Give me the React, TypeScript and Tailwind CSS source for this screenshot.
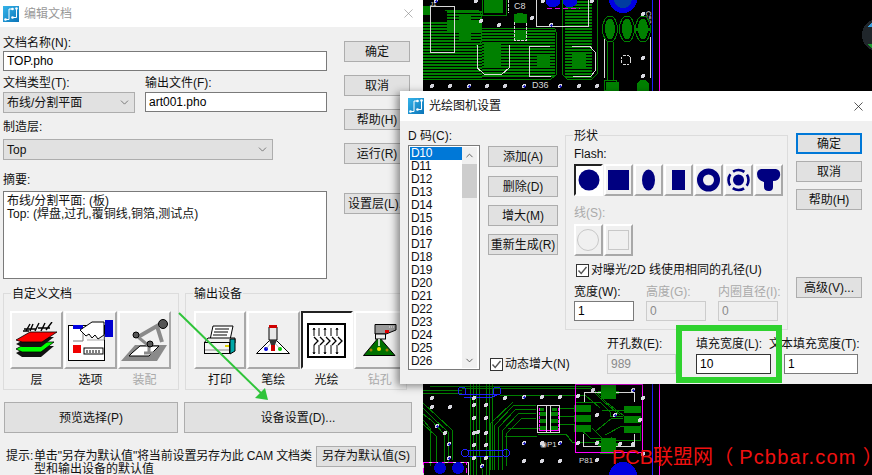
import { ChevronDown, ChevronUp, X } from "lucide-react";
import type { ReactNode } from "react";

const GREEN = "#008000";

const AppIcon = () => (
  <svg width="16" height="16" viewBox="0 0 16 16" className="shrink-0">
    <defs>
      <linearGradient id="appbg" x1="0" y1="0" x2="1" y2="1">
        <stop offset="0" stopColor="#35b4ea" />
        <stop offset="1" stopColor="#0b74b8" />
      </linearGradient>
    </defs>
    <rect width="16" height="16" fill="url(#appbg)" />
    <path d="M2.5 13.5H6V3H9.5M13.5 2.5V11.5H9.5" fill="none" stroke="#fff" strokeWidth="1" />
    <circle cx="2.5" cy="13.5" r="1.3" fill="#fff" />
    <circle cx="9.5" cy="3" r="1.3" fill="#fff" />
    <circle cx="13.5" cy="2.5" r="1.3" fill="#fff" />
    <circle cx="9.5" cy="11.5" r="1.3" fill="#fff" />
  </svg>
);

const Btn = ({ children, className = "" }: { children: ReactNode; className?: string }) => (
  <div className={`flex h-[21px] items-center justify-center whitespace-nowrap border border-[#adadad] bg-[#e1e1e1] text-[12px] text-[#111] ${className}`}>
    {children}
  </div>
);

const Field = ({ value, className = "", disabled = false }: { value: string; className?: string; disabled?: boolean }) => (
  <input
    readOnly
    value={value}
    className={`block h-[20px] border px-[3px] text-[12px] outline-none ${
      disabled ? "border-[#cccccc] bg-[#efefef] text-[#8a8a8a]" : "border-[#7a7a7a] bg-white text-black"
    } ${className}`}
  />
);

const Select = ({ value, className = "" }: { value: string; className?: string }) => (
  <div className={`flex h-[21px] items-center justify-between border border-[#adadad] bg-[#e1e1e1] pl-[3px] pr-[3px] text-[12px] text-[#111] ${className}`}>
    <span>{value}</span>
    <ChevronDown size={13} strokeWidth={1.2} className="text-[#444]" />
  </div>
);

const Check = ({ label }: { label: string }) => (
  <div className="flex h-[16px] items-center gap-[2px] whitespace-nowrap text-[12px] text-[#111]">
    <span className="flex h-[13px] w-[13px] items-center justify-center border border-[#333] bg-white">
      <svg width="11" height="11" viewBox="0 0 11 11">
        <path d="M1.5 5.5L4.2 8.5L9.5 2" fill="none" stroke="#555" strokeWidth="1.4" />
      </svg>
    </span>
    {label}
  </div>
);

const Group = ({ title, className = "", children }: { title: string; className?: string; children: ReactNode }) => (
  <div className={`relative border border-[#dcdcdc] ${className}`}>
    <span className="absolute -top-[7px] left-[7px] bg-[#f0f0f0] px-[1px] text-[12px] leading-[14px] text-[#111]">{title}</span>
    {children}
  </div>
);

const IconButton = ({ pressed = false, children }: { pressed?: boolean; children: ReactNode }) => (
  <div
    className={`flex h-[58px] w-[53px] items-center justify-center border-2 ${
      pressed
        ? "border-t-[#222] border-l-[#222] border-r-white border-b-white bg-white"
        : "border-t-white border-l-white border-r-[#a8a8a8] border-b-[#a8a8a8] bg-[#f0f0f0]"
    }`}
  >
    {children}
  </div>
);

const LayerIcon = () => (
  <svg width="42" height="36" viewBox="0 0 42 36">
    <path d="M0 31L13 24H38L25 35H6Z" fill="#111" />
    <path d="M0 27L13 20H38L25 30H6Z" fill="#00ff00" stroke="#000" strokeWidth="0.8" />
    <path d="M0 22L13 15H38L25 25H6Z" fill="#111" />
    <path d="M0 18L14 10H41L26 20H6Z" fill="#ff0000" stroke="#000" strokeWidth="0.8" />
    <path d="M10 9L14 2M14 9L17 2M19 9L23 1M25 9L29 1M30 8L36 0M8 7H20M22 6H34M7 9H13" stroke="#000" strokeWidth="1.4" fill="none" />
  </svg>
);

const OptionIcon = () => (
  <svg width="45" height="41" viewBox="0 0 45 41">
    <rect x="0.5" y="5.5" width="36" height="35" fill="#fff" stroke="#000" />
    <rect x="5" y="5" width="10" height="4" fill="#0000e0" />
    <path d="M5 21H15M15 13V21" stroke="#777" fill="none" />
    <path d="M15 14H36V20H19" fill="#f4f4f4" stroke="#aaa" />
    <rect x="5" y="25" width="8" height="8" fill="#f00000" />
    <rect x="16" y="28" width="19" height="6" fill="#fff" stroke="#000" />
    <path d="M19 30v3M22 30v3M25 30v3M28 30v3M31 30v3" stroke="#000" />
    <path d="M12 10L24 2H36V15L30 19L27 15L24 18L21 14L18 16Z" fill="#fff" stroke="#000" />
    <rect x="37" y="0" width="8" height="17" fill="#0000d0" />
  </svg>
);

const RobotIcon = () => (
  <svg width="47" height="44" viewBox="0 0 47 44">
    <path d="M0 43L14 27H46L36 43Z" fill="#8a8a8a" />
    <path d="M11 35L19 28H38L28 38H8Z" fill="#fff" stroke="#000" />
    <path d="M17 19L36 8L41 24" fill="none" stroke="#8a8a8a" strokeWidth="4" />
    <path d="M17 19L28 28V34" fill="none" stroke="#8a8a8a" strokeWidth="3" />
    <path d="M23 35H33" stroke="#8a8a8a" strokeWidth="3" />
    <circle cx="15" cy="17" r="3" fill="#555" stroke="#000" />
    <circle cx="42" cy="6" r="4.5" fill="#555" stroke="#000" />
    <circle cx="29" cy="26" r="3" fill="#555" stroke="#000" />
  </svg>
);

const PrinterIcon = () => (
  <svg width="32" height="30" viewBox="0 0 32 30">
    <path d="M9 1H29L26 15H6Z" fill="#fff" stroke="#000" />
    <path d="M11 4H25M10 7H24M9 10H23" stroke="#000" />
    <path d="M4 13H31V18H0Z" fill="#f0f0f0" stroke="#000" />
    <path d="M26 14H31V26L26 29Z" fill="#00a8a8" stroke="#000" />
    <rect x="0.5" y="17.5" width="25" height="11" fill="#f4f4f4" stroke="#000" />
    <rect x="21" y="20" width="4" height="2" fill="#e0d000" />
    <path d="M1 25H25" stroke="#888" />
  </svg>
);

const PenIcon = () => (
  <svg width="34" height="30" viewBox="0 0 34 30">
    <path d="M0.5 28.5L17 12L33.5 28.5Z" fill="#fff" stroke="#000" />
    <path d="M13 2H21V15H13Z" fill="#e8e8e8" stroke="#000" />
    <rect x="13" y="0" width="8" height="3" fill="#d00000" />
    <path d="M13 15H21L19 20H15Z" fill="#333" />
    <rect x="15" y="20" width="4" height="6" fill="#d00000" />
    <circle cx="10" cy="24" r="2" fill="#0000e0" />
    <circle cx="24" cy="24" r="2" fill="#00d000" />
    <path d="M10 24L15 18M24 24L19 18" stroke="#888" strokeWidth="0.6" />
  </svg>
);

const PhotoIcon = () => (
  <svg width="39" height="35" viewBox="0 0 39 35">
    <rect x="1" y="1" width="37" height="33" fill="#fff" stroke="#000" strokeWidth="2" />
    <path d="M7 5V13M12 5V13M18 5V13M24 5V13M30 5V13M7 22V31M12 22V31M18 22V31M24 22V31M30 22V31" stroke="#000" />
    <path d="M6 7L7 5L8 7M17 7L18 5L19 7M29 7L30 5L31 7M6 29L7 31L8 29M17 29L18 31L19 29M29 29L30 31L31 29" fill="none" stroke="#000" />
    <path d="M7 14L11 18L7 22M13 14L17 18L13 22M19 14L23 18L19 22M25 14L29 18L25 22M31 14L35 18L31 22" fill="none" stroke="#000" strokeWidth="1.3" />
  </svg>
);

const DrillIcon = () => (
  <svg width="34" height="33" viewBox="0 0 34 33">
    <path d="M0.5 31.5L16 13L32 31.5Z" fill="#007000" stroke="#000" />
    <path d="M12 0.5H33V6L23 10H12Z" fill="#9a9a9a" stroke="#000" />
    <path d="M26 3h1M28 3h1M30 3h1" stroke="#eee" />
    <rect x="12.5" y="10" width="10" height="5" fill="#eee" stroke="#000" />
    <rect x="22" y="6" width="4" height="3" fill="#e00000" />
    <path d="M16 15V22" stroke="#fff" strokeWidth="1.5" />
    <circle cx="16" cy="25" r="2" fill="#e8e800" />
    <circle cx="8" cy="26" r="1.5" fill="#a08000" />
    <circle cx="24" cy="26" r="1.5" fill="#a08000" />
  </svg>
);

const ShapeButton = ({ pressed = false, children }: { pressed?: boolean; children: ReactNode }) => (
  <div
    className={`flex h-[32px] w-[29px] items-center justify-center border-2 ${
      pressed
        ? "border-t-[#222] border-l-[#222] border-r-white border-b-white bg-white"
        : "border-t-white border-l-white border-r-[#a8a8a8] border-b-[#a8a8a8] bg-[#f0f0f0]"
    }`}
  >
    <svg width="25" height="28" viewBox="0 0 25 28">
      {children}
    </svg>
  </div>
);

const NAVY = "#000080";

const Shapes = () => (
  <div className="mt-[2px] flex gap-[1px]">
    <ShapeButton pressed>
      <circle cx="13" cy="14" r="10.5" fill={NAVY} />
    </ShapeButton>
    <ShapeButton>
      <rect x="2" y="4" width="21" height="20" fill={NAVY} />
    </ShapeButton>
    <ShapeButton>
      <ellipse cx="12.5" cy="14" rx="6.5" ry="10.5" fill={NAVY} />
    </ShapeButton>
    <ShapeButton>
      <rect x="6" y="4" width="13" height="20" fill={NAVY} />
    </ShapeButton>
    <ShapeButton>
      <circle cx="12.5" cy="14" r="8.5" fill="none" stroke={NAVY} strokeWidth="6" />
    </ShapeButton>
    <ShapeButton>
      <circle cx="12.5" cy="14" r="5.5" fill={NAVY} />
      <circle cx="12.5" cy="14" r="10" fill="none" stroke={NAVY} strokeWidth="2.6" strokeDasharray="12 3.7" strokeDashoffset="6" />
    </ShapeButton>
    <ShapeButton>
      <path d="M5 3H20Q25 4 24 10Q23 15 17 15V21Q17 25 13 25Q8 25 8 21V16Q1 14 1 8Q1 4 5 3Z" fill={NAVY} />
    </ShapeButton>
  </div>
);

const LineShapes = () => (
  <div className="mt-[3px] flex gap-[1px]">
    <ShapeButton>
      <circle cx="12" cy="14" r="10.5" fill="none" stroke="#c8c8c8" />
    </ShapeButton>
    <ShapeButton>
      <rect x="2.5" y="4.5" width="20" height="19" fill="none" stroke="#c8c8c8" />
    </ShapeButton>
  </div>
);

const Stripes = ({ x1, x2, y1, y2 }: { x1: number; x2: number; y1: number; y2: number }) => {
  const ys: number[] = [];
  for (let y = y1; y <= y2; y += 3) ys.push(y);
  return (
    <>
      {ys.map((y) => (
        <line key={y} x1={x1} x2={x2} y1={y + 1} y2={y + 1} stroke={GREEN} strokeWidth="2" />
      ))}
    </>
  );
};

const Via = ({ x, y, blue = false }: { x: number; y: number; blue?: boolean }) => (
  <>
    <circle cx={x} cy={y} r="2" fill="#d8d8e0" />
    {blue && <circle cx={x + 0.5} cy={y + 0.5} r="1.1" fill="#2020c0" />}
  </>
);

const topVias: [number, number, boolean?][] = [
  [432, 86], [450, 86], [469, 86, true], [487, 86], [505, 86], [524, 86, true], [560, 86, true], [579, 86], [597, 86],
  [481, 21], [499, 25], [551, 25, true], [532, 18], [592, 1], [543, 1], [476, 1], [436, 1, true], [643, 14], [643, 58], [643, 76],
];

const bottomVias: [number, number, boolean?][] = [
  [432, 398], [474, 398], [505, 398], [524, 397, true], [542, 397], [560, 397],
  [432, 407], [450, 407], [474, 405], [486, 405], [478, 432], [474, 418], [486, 418], [474, 433], [486, 433],
  [437, 426, true], [445, 433], [449, 444, true], [474, 445], [486, 445], [449, 458, true], [474, 458], [486, 458],
  [524, 443, true], [542, 443], [560, 443, true], [524, 461], [542, 461], [560, 461], [482, 466, true],
  [578, 396], [593, 390], [633, 390, true], [643, 398], [597, 415], [615, 415, true], [640, 420],
  [578, 443], [597, 443], [620, 444], [633, 444], [643, 454], [597, 460],
];

const PcbBackground = () => (
  <svg className="absolute inset-0" width="872" height="475" viewBox="0 0 872 475" shapeRendering="crispEdges">
    <rect width="872" height="475" fill="#000" />

    {/* top: copper pours */}
    <Stripes x1={423} x2={482} y1={22} y2={76} />
    <Stripes x1={447} x2={482} y1={11} y2={30} />
    <Stripes x1={482} x2={555} y1={30} y2={76} />
    <Stripes x1={565} x2={592} y1={1} y2={76} />
    <path d="M482 28H553Q556 28 556 32V75L551 79H482M420 79H482" fill="none" stroke={GREEN} />
    <path d="M562 0V74L567 79H592L597 74V0" fill="none" stroke={GREEN} />
    <path d="M445 10H478L481 14V42L476 46H423" fill="none" stroke={GREEN} />
    <rect x="423" y="6" width="7" height="9" fill={GREEN} />
    <rect x="459" y="16" width="12" height="24" fill={GREEN} />
    <rect x="484" y="43" width="17" height="25" fill={GREEN} />
    <rect x="537" y="54" width="13" height="13" fill={GREEN} />
    <rect x="572" y="54" width="14" height="13" fill={GREEN} />
    <rect x="484" y="0" width="19" height="13" fill={GREEN} />
    <path d="M482 0V15H506V0" fill="none" stroke={GREEN} />
    <rect x="515" y="30" width="11" height="10" fill={GREEN} />
    <rect x="514" y="14" width="13" height="9" fill={GREEN} />
    <circle cx="520" cy="18" r="5.5" fill={GREEN} />

    {/* top: silk outlines */}
    <g fill="none" stroke="#d8d8d8">
      <rect x="430.5" y="6.5" width="24" height="46" />
      <path d="M477.5 45V68L484 74H502L509 68V45" />
      <path d="M550 46.5H529.5V76.5H551" />
      <path d="M572 46.5H590L595 52V71L591 76H573" />
      <path d="M536.5 0V26.5H588V0" />
      <path d="M514.5 22V40H526.5V22M508 0V13" strokeDasharray="3 1" />
      <circle cx="626" cy="60" r="5" strokeDasharray="3 1" />
      <path d="M604 37V78M650 37V78" />
    </g>
    <text x="430" y="6" fontSize="6" fill="#ddd" fontFamily="Liberation Sans">J1</text>
    <text x="514" y="9" fontSize="9" fill="#ddd" fontFamily="Liberation Sans">C8</text>
    <text x="532" y="88" fontSize="9" fill="#ddd" fontFamily="Liberation Sans">D36</text>
    <text x="0" y="0" transform="translate(646 11) rotate(90)" fontSize="7" fill="#ddd" fontFamily="Liberation Sans">C53</text>

    {/* top: oval pads */}
    {[610, 627, 643].map((x) => (
      <g key={x}>
        <ellipse cx={x} cy="29" rx="7.5" ry="13" fill="#000" stroke={GREEN} />
        <ellipse cx={x} cy="29" rx="5" ry="10.5" fill={GREEN} />
      </g>
    ))}
    <path d="M607 42V80M613 42V80M604 80H616V90H604Z" fill="none" stroke={GREEN} />
    <rect x="606" y="82" width="13" height="9" fill={GREEN} />
    <path d="M637 91V83Q643 76 649 83V91" fill={GREEN} />
    <path d="M636 29H651" stroke={GREEN} strokeWidth="3" />

    {/* top: blue pads */}
    <circle cx="623" cy="-1" r="14" fill="#0000e0" />
    <circle cx="623" cy="-1" r="9" fill="#003ca0" />
    <circle cx="553" cy="0" r="7.5" fill="#0000e0" />
    <circle cx="570" cy="0" r="7.5" fill="#0000e0" />
    <path d="M547 8H580" stroke="#e000e0" strokeDasharray="5 3" />

    {/* board edges */}
    <path d="M652.5 0V91M652.5 384V475" stroke="#2020ff" />
    <path d="M659.5 0V91M659.5 384V475" stroke="#ff00ff" />

    {/* bottom: traces */}
    <g fill="none" stroke={GREEN}>
      <path d="M423 390H462M423 393H462M462 388H590L604 402L620 415" />
      <path d="M430 386H590L606 402L624 416M500 395H585L600 408" />
      <path d="M470 384V475M473 384V475M476 384V475M479 384V450L483 475M486 384V475M489 384V475M492 384V470" />
      <path d="M423 403L437 416L452 430V460M423 408L433 418L448 432V462M423 414L431 420L444 434V468M423 424L436 436V462" />
      <path d="M423 420L430 428V466M513 402L490 424V470M536 405H514L494 426V470M536 409H516L498 428V470M536 413H519L502 431V470M536 418H522L506 434V466" />
      <path d="M508 428H540M505 436H537" />
      <path d="M559 408H575M559 416H585M559 424H575L590 438H615M538 434H566L572 442H600" />
      <path d="M602 410H625M596 431L612 418H623M605 435L622 426H640M592 428L604 440H612" />
      <path d="M575 402H600L610 412V416H623" />
      <path d="M600 454L612 437M596 440H640V425" />
    </g>

    {/* bottom: pads and components */}
    {[405, 415, 425].map((y) => (
      <g key={y}>
        <rect x="574" y={y} width="17" height="7" fill={GREEN} />
        <rect x="624" y={y + 1} width="17" height="7" fill={GREEN} />
      </g>
    ))}
    <rect x="601" y="384" width="15" height="15" fill={GREEN} />
    <rect x="601" y="438" width="15" height="16" fill={GREEN} />
    <path d="M598 392H619M598 444H619" stroke={GREEN} strokeWidth="3" />
    <rect x="575.5" y="384.5" width="67" height="68" fill="none" stroke="#ff00ff" />
    <path d="M584 402V392H601M616 392H634V402M583 434V446H601M616 446H634V434" fill="none" stroke="#d8d8d8" />
    <rect x="537.5" y="405.5" width="22" height="27" fill="none" stroke="#d8d8d8" />
    <rect x="539" y="408" width="5" height="3" fill={GREEN} />
    <rect x="552" y="408" width="5" height="3" fill={GREEN} />
    {[412, 419, 426].map((y) => (
      <g key={y}>
        <rect x="539" y={y} width="7" height="4" fill={GREEN} />
        <rect x="551" y={y} width="7" height="4" fill={GREEN} />
      </g>
    ))}
    <path d="M539 408V430H558V408M539 430H558" fill="none" stroke="#ff00ff" strokeDasharray="3 1" />
    <path d="M546 406V432M550 406V432" stroke="#d8d8d8" />
    <text x="540" y="447" fontSize="8" fill="#ddd" fontFamily="Liberation Sans">◉P1</text>
    <text x="579" y="463" fontSize="8" fill="#ddd" fontFamily="Liberation Sans">P81</text>

    {/* bottom: blue capsules */}
    <g fill="none" stroke="#2020ff">
      <circle cx="462" cy="391" r="4" />
      <circle cx="497" cy="391" r="4" />
      <path d="M464 397H492L497 395M464 394H495" />
      <circle cx="465" cy="453" r="3.5" />
      <circle cx="506" cy="453" r="3.5" />
      <path d="M468 450H503M468 456H503" />
    </g>

    {/* bottom: corner connector */}
    <rect x="423" y="462" width="45" height="14" fill="none" stroke="#d8d8d8" />
    <rect x="423.5" y="462.5" width="43" height="14" fill="none" stroke="#ff00ff" strokeDasharray="5 3" />
    <circle cx="440" cy="468" r="6" fill="#0000d0" />
    <circle cx="458" cy="468" r="6" fill="#0000d0" />
    <circle cx="623" cy="476" r="14" fill="#0000e0" />

    {[...topVias, ...bottomVias].map(([x, y, blue], i) => (
      <Via key={i} x={x} y={y} blue={blue} />
    ))}

    {/* top right of the window: view control */}
    <circle cx="878" cy="35" r="16" fill="#20262b" />
    <path d="M868 27L872 22V27Z" fill="#3aa0e0" />
    <path d="M868 44L872 49V44Z" fill="#1c9a30" />
  </svg>
);

const EditDialog = () => (
  <div className="absolute left-0 top-0 flex h-[475px] w-[423px] flex-col bg-[#f0f0f0]">
    <div className="flex h-[27px] shrink-0 items-center bg-white pl-[3px] pr-[7px]">
      <AppIcon />
      <span className="ml-[5px] text-[12px] text-[#999]">编辑文档</span>
      <X size={15} strokeWidth={1} className="ml-auto text-[#888]" />
    </div>

    <div className="flex pl-[3px]">
      <div className="w-[324px] pt-[8px] text-[12px] text-[#111]">
        <div className="h-[16px] leading-[16px]">文档名称(N):</div>
        <Field value="TOP.pho" className="w-full" />
        <div className="mt-[4px] grid grid-cols-[132px_182px] gap-x-[10px]">
          <div className="h-[16px] leading-[16px]">文档类型(T):</div>
          <div className="h-[16px] leading-[16px]">输出文件(F):</div>
          <Select value="布线/分割平面" className="mt-[1px]" />
          <Field value="art001.pho" className="mt-[1px] w-full" />
        </div>
        <div className="mt-[6px] h-[16px] leading-[16px]">制造层:</div>
        <Select value="Top" className="mt-[4px] w-[270px]" />
        <div className="mt-[12px] h-[16px] leading-[16px]">摘要:</div>
        <div className="mt-[3px] h-[88px] border border-[#7a7a7a] bg-white px-[3px] pt-[3px] text-[12px] leading-[13px]">
          <div>布线/分割平面: (板)</div>
          <div>Top: (焊盘,过孔,覆铜线,铜箔,测试点)</div>
        </div>
      </div>
      <div className="ml-[17px] flex w-[66px] flex-col gap-[13px] pt-[14px]">
        <Btn>确定</Btn>
        <Btn>取消</Btn>
        <Btn>帮助(H)</Btn>
        <Btn>运行(R)</Btn>
        <Btn className="mt-[16px] justify-start pl-[3px]">设置层(L)...</Btn>
      </div>
    </div>

    <div className="mt-[14px] flex gap-[6px] pl-[3px]">
      <Group title="自定义文档" className="h-[97px] w-[176px]">
        <div className="mt-[17px] flex gap-[1px] pl-[6px]">
          <IconButton><LayerIcon /></IconButton>
          <IconButton><OptionIcon /></IconButton>
          <IconButton><RobotIcon /></IconButton>
        </div>
        <div className="flex gap-[1px] pl-[6px] text-center text-[12px] leading-[22px] text-[#111]">
          <span className="w-[53px]">层</span>
          <span className="w-[53px]">选项</span>
          <span className="w-[53px] text-[#aaa]">装配</span>
        </div>
      </Group>
      <Group title="输出设备" className="h-[97px] w-[222px]">
        <div className="mt-[17px] flex gap-[1px] pl-[8px]">
          <IconButton><PrinterIcon /></IconButton>
          <IconButton><PenIcon /></IconButton>
          <IconButton pressed><PhotoIcon /></IconButton>
          <IconButton><DrillIcon /></IconButton>
        </div>
        <div className="flex gap-[1px] pl-[8px] text-center text-[12px] leading-[22px] text-[#111]">
          <span className="w-[53px]">打印</span>
          <span className="w-[53px]">笔绘</span>
          <span className="w-[53px]">光绘</span>
          <span className="w-[53px] text-[#aaa]">钻孔</span>
        </div>
      </Group>
    </div>

    <div className="mt-[12px] flex gap-[6px] pl-[4px]">
      <Btn className="!h-[31px] w-[174px]">预览选择(P)</Btn>
      <Btn className="!h-[31px] w-[228px]">设备设置(D)...</Btn>
    </div>

    <div className="mt-[13px] flex pl-[6px] text-[12px] leading-[13px] text-[#111]">
      <span className="w-[28px] shrink-0 pt-[4px]">提示:</span>
      <span className="w-[276px] shrink-0 whitespace-nowrap pt-[4px]">
        <span className="tracking-[-0.15px]">单击"另存为默认值"将当前设置另存为此 CAM 文档类</span>
        <br />
        型和输出设备的默认值
      </span>
      <Btn className="ml-[6px] w-[100px]">另存为默认值(S)</Btn>
    </div>
  </div>
);

const codes = Array.from({ length: 17 }, (_, i) => `D${i + 10}`);

const PhotoDialog = () => (
  <div className="absolute left-[400px] top-[91px] flex h-[293px] w-[472px] flex-col bg-[#f0f0f0] shadow-[-3px_2px_8px_rgba(0,0,0,0.45)]">
    <div className="flex h-[30px] shrink-0 items-center bg-white pl-[8px] pr-[6px]">
      <AppIcon />
      <span className="ml-[5px] text-[12px] text-[#111]">光绘图机设置</span>
      <X size={15} strokeWidth={1.2} className="ml-auto text-[#222]" />
    </div>
    <div className="flex pl-[8px] text-[12px] text-[#111]">
      <div className="w-[72px] pt-[7px]">
        <div className="h-[17px] leading-[16px]">D 码(C):</div>
        <div className="flex h-[225px] border border-[#7a7a7a] bg-white p-[1px]">
          <div className="w-[52px] leading-[13px]">
            {codes.map((c, i) => (
              <div key={c} className={`h-[13px] pl-[1px] tracking-[-0.3px] ${i === 0 ? "bg-[#0078d7] text-white" : ""}`}>
                {c}
              </div>
            ))}
          </div>
          <div className="flex w-[15px] flex-col items-center bg-[#f0f0f0]">
            <ChevronUp size={11} strokeWidth={2} className="my-[3px] text-[#555]" />
            <div className="h-[34px] w-full bg-[#cdcdcd]" />
            <ChevronDown size={11} strokeWidth={2} className="mt-auto mb-[2px] text-[#555]" />
          </div>
        </div>
      </div>

      <div className="ml-[8px] flex w-[70px] flex-col pt-[25px]">
        <Btn>添加(A)</Btn>
        <Btn className="mt-[9px]">删除(D)</Btn>
        <Btn className="mt-[8px]">增大(M)</Btn>
        <Btn className="mt-[8px]">重新生成(R)</Btn>
        <div className="ml-[2px] mt-[101px]">
          <Check label="动态增大(N)" />
        </div>
      </div>

      <div className="ml-[7px] flex flex-col">
        <div className="flex">
          <Group title="形状" className="mt-[14px] h-[195px] w-[223px] pl-[8px] pt-[10px]">
            <div className="h-[16px] leading-[16px]">Flash:</div>
            <Shapes />
            <div className="mt-[9px] h-[16px] leading-[16px] text-[#aaa]">线(S):</div>
            <LineShapes />
            <div className="ml-[2px] mt-[6px]">
              <Check label="对曝光/2D 线使用相同的孔径(U)" />
            </div>
            <div className="mt-[6px] grid grid-cols-[60px_60px_60px] gap-x-[12px]">
              <div className="h-[16px] leading-[16px]">宽度(W):</div>
              <div className="h-[16px] whitespace-nowrap leading-[16px] text-[#aaa]">高度(G):</div>
              <div className="h-[16px] whitespace-nowrap leading-[16px] text-[#aaa]">内圈直径(I):</div>
              <Field value="1" className="mt-[1px] w-full" />
              <Field value="0" disabled className="mt-[1px] w-full" />
              <Field value="0" disabled className="mt-[1px] w-full" />
            </div>
          </Group>
          <div className="ml-[8px] flex w-[66px] flex-col pt-[12px]">
            <Btn className="!border-2 !border-[#0078d7]">确定</Btn>
            <Btn className="mt-[7px]">取消</Btn>
            <Btn className="mt-[7px]">帮助(H)</Btn>
            <Btn className="mt-[67px]">高级(V)...</Btn>
          </div>
        </div>
        <div className="mt-[6px] flex pl-[42px]">
          <div className="w-[69px]">
            <div className="h-[18px] whitespace-nowrap leading-[16px]">开孔数(E):</div>
            <Field value="989" disabled className="w-full" />
          </div>
          <div className="ml-[20px] w-[75px]">
            <div className="h-[18px] whitespace-nowrap leading-[16px]">填充宽度(L):</div>
            <Field value="10" className="w-full border-[#333]" />
          </div>
          <div className="ml-[13px] w-[74px]">
            <div className="-ml-[15px] h-[18px] whitespace-nowrap leading-[16px]">文本填充宽度(T):</div>
            <Field value="1" className="w-full" />
          </div>
        </div>
      </div>
    </div>
    <div className="absolute left-[276px] top-[234px] h-[58px] w-[106px] border-[6px] border-[#2fd22f]" />
  </div>
);

export default function App() {
  return (
    <div className="relative h-[475px] w-[872px] overflow-hidden bg-black font-['Liberation_Sans','Noto_Sans_CJK_SC',sans-serif]">
      <PcbBackground />
      <EditDialog />
      <PhotoDialog />
      <svg className="absolute left-[175px] top-[308px]" width="105" height="100" viewBox="0 0 105 100">
        <path d="M4 5L88 87" stroke="#2fc43a" strokeWidth="2" />
        <path d="M93 92L80 90L90 80Z" fill="#2fc43a" />
      </svg>
      <div className="absolute left-[612px] top-[445px] whitespace-nowrap text-[20px] leading-[24px] text-[#f01010]">
        PCB联盟网<span className="inline-block w-[26px]">（</span>
        <span className="tracking-[1.2px]">Pcbbar.com</span>
        <span className="ml-[6px] tracking-[-11px]">）</span>
      </div>
    </div>
  );
}
